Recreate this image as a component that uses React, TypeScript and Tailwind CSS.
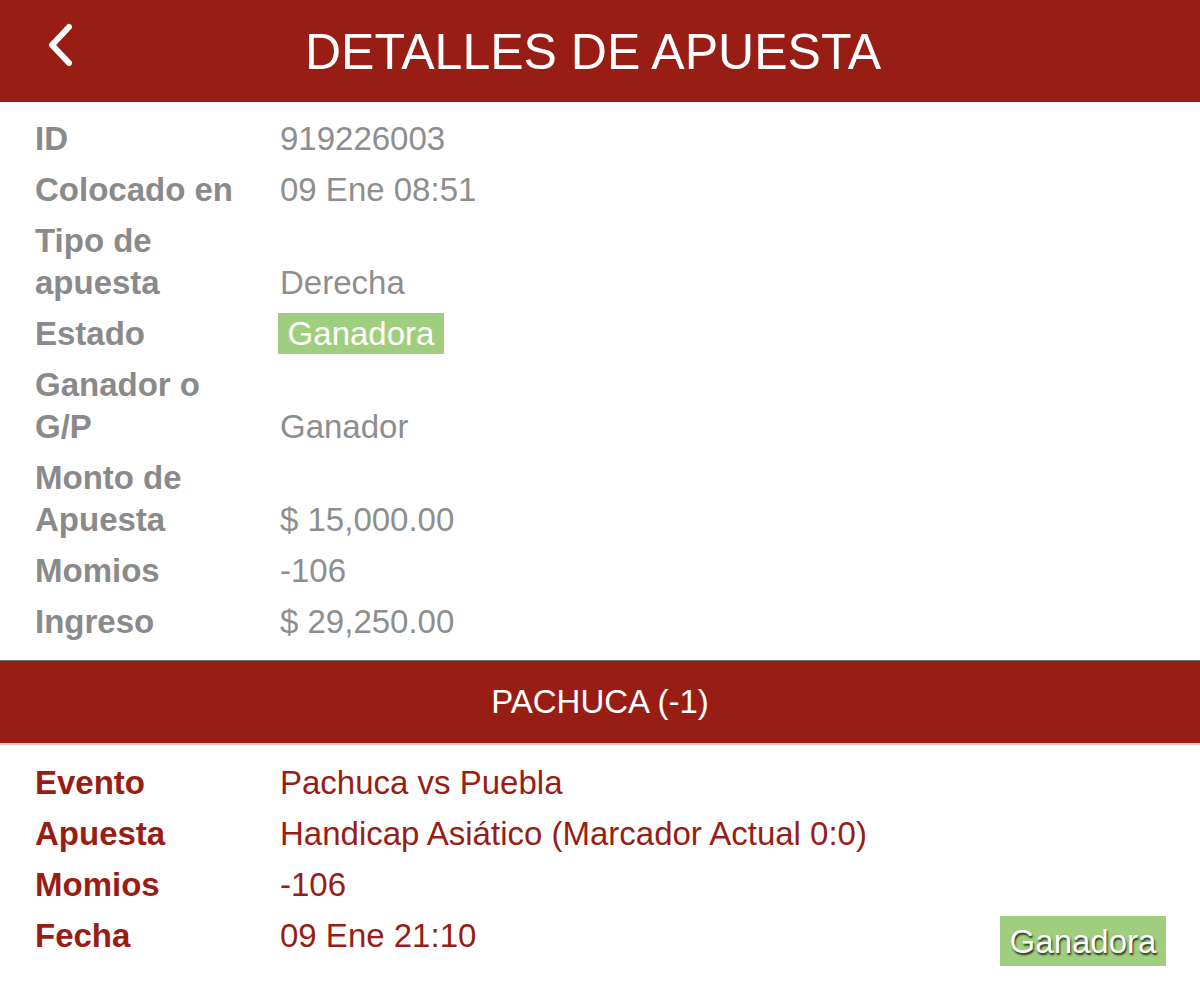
import type { ReactNode } from 'react';

type Row = { label: string[]; value: ReactNode };

const Badge = ({ shadow = false, className = '' }: { shadow?: boolean; className?: string }) => (
    <span
        className={`inline-flex items-center justify-center w-[166px] bg-[#9fcf7e] text-white leading-none ${className}`}
        style={shadow ? { textShadow: '1px 2px 2px rgba(0,0,0,0.8)' } : undefined}
    >
        Ganadora
    </span>
);

const betRows: Row[] = [
    { label: ['ID'], value: '919226003' },
    { label: ['Colocado en'], value: '09 Ene 08:51' },
    { label: ['Tipo de', 'apuesta'], value: 'Derecha' },
    { label: ['Estado'], value: <Badge className="h-[41px] -ml-[2px] mb-[1px] align-bottom" /> },
    { label: ['Ganador o', 'G/P'], value: 'Ganador' },
    { label: ['Monto de', 'Apuesta'], value: '$ 15,000.00' },
    { label: ['Momios'], value: '-106' },
    { label: ['Ingreso'], value: '$ 29,250.00' },
];

const eventRows = [
    { label: 'Evento', value: 'Pachuca vs Puebla' },
    { label: 'Apuesta', value: 'Handicap Asiático (Marcador Actual 0:0)' },
    { label: 'Momios', value: '-106' },
];

function BackChevron() {
    return (
        <svg width="28" height="44" viewBox="0 0 28 44" fill="none" className="absolute left-[46px] top-[23px]">
            <polyline points="23,4 6,22 23,40" stroke="white" strokeWidth="6" strokeLinecap="round" strokeLinejoin="round" />
        </svg>
    );
}

export default function App() {
    return (
        <div className="w-[1200px] min-h-[987px] bg-white font-['Liberation_Sans',Arial,sans-serif] text-[33px] leading-[42px]">
            <header className="relative h-[102px] bg-[#981e15] flex items-center justify-center">
                <BackChevron />
                <h1 className="text-white text-[50px] leading-none pr-[14px] pt-[2px]">DETALLES DE APUESTA</h1>
            </header>

            <section className="pt-[11.5px] pb-[12.5px] px-[35px]">
                {betRows.map((row) => (
                    <div key={row.label.join(' ')} className="flex items-end py-[4.5px]">
                        <div className="w-[245px] shrink-0 font-bold text-[#8a8a8a]">
                            {row.label.map((l) => (
                                <div key={l}>{l}</div>
                            ))}
                        </div>
                        <div className="flex items-end text-[#8e8e8e]">{row.value}</div>
                    </div>
                ))}
            </section>

            <div className="h-[85px] bg-[#981e15] border-t border-[#6e6e6e] border-b-2 border-b-[#e8c4c0] flex items-center justify-center text-white">
                PACHUCA (-1)
            </div>

            <section className="pt-[12.5px] pb-[20px] pl-[35px] pr-[34px] text-[#981d14]">
                {eventRows.map((row) => (
                    <div key={row.label} className="flex py-[4.5px]">
                        <div className="w-[245px] shrink-0 font-bold">{row.label}</div>
                        <div>{row.value}</div>
                    </div>
                ))}
                <div className="flex items-start py-[4.5px]">
                    <div className="w-[245px] shrink-0 font-bold">Fecha</div>
                    <div className="flex-1">09 Ene 21:10</div>
                    <Badge shadow className="h-[50px] mt-[1px]" />
                </div>
            </section>
        </div>
    );
}
